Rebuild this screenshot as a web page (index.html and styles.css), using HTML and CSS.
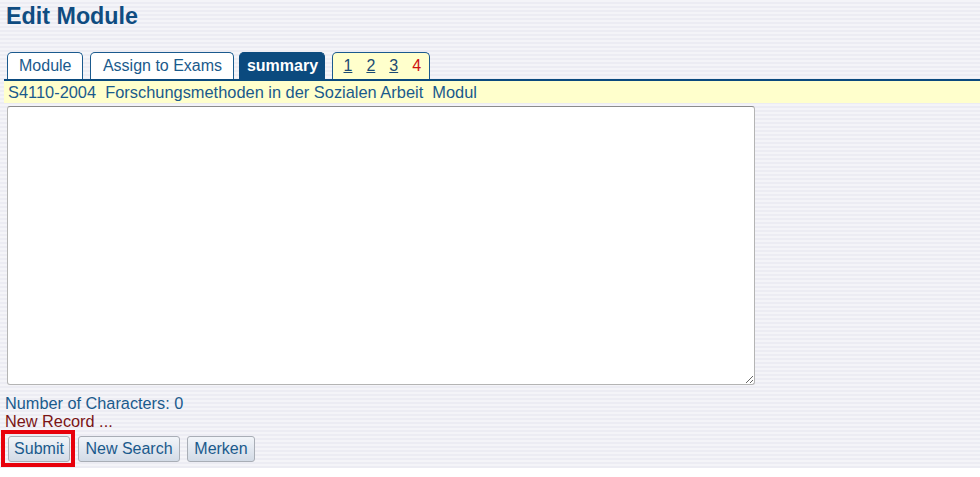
FILE: index.html
```html
<!DOCTYPE html>
<html lang="en">
<head>
<meta charset="utf-8">
<title>Edit Module</title>
<link rel="stylesheet" href="styles.css">
</head>
<body>
<div class="page">
  <h1 class="title">Edit Module</h1>
  <div class="content">
    <div class="tabs">
      <a class="tab">Module</a>
      <a class="tab tab-gap-s">Assign to Exams</a>
      <a class="tab tab-active">summary</a>
      <div class="tab tab-pages">
        <a class="pg">1</a><a class="pg">2</a><a class="pg">3</a><span class="pg pg-cur">4</span>
      </div>
    </div>
    <div class="record">S4110-2004&nbsp; Forschungsmethoden in der Sozialen Arbeit&nbsp; Modul</div>
    <textarea class="summary-box"></textarea>
    <div class="count">Number of Characters: 0</div>
    <div class="status">New Record ...</div>
    <div class="buttons">
      <span class="highlight"><button class="btn btn-submit">Submit</button></span>
      <button class="btn btn-search">New Search</button>
      <button class="btn btn-merken">Merken</button>
    </div>
  </div>
</div>
</body>
</html>
```
FILE: styles.css
```css
html, body {
  margin: 0;
  padding: 0;
  background: #ffffff;
}
body {
  font-family: "Liberation Sans", Arial, sans-serif;
  font-size: 16px;
  color: #1a5a8c;
}
.page {
  height: 468px;
  background: repeating-linear-gradient(to bottom, #f4f4f8 0, #f4f4f8 2px, #ececf3 2px, #ececf3 4px);
  overflow: hidden;
}
.title {
  margin: 0;
  padding: 3px 0 0 6px;
  font-size: 23.3px;
  font-weight: bold;
  color: #0f4c81;
  line-height: 26px;
}
.content {
  padding: 23px 0 0 4px;
}
.tabs {
  display: flex;
  align-items: flex-end;
  padding-left: 3px;
  border-bottom: 2px solid #0b4a7e;
  height: 27px;
}
.tab {
  box-sizing: border-box;
  height: 27px;
  padding: 0 11px;
  margin-right: 7px;
  border: 1px solid #1b5a8e;
  border-bottom: none;
  border-radius: 5px 5px 0 0;
  background: #ffffff;
  color: #1a5a8c;
  line-height: 26px;
  font-size: 16px;
}
.tab-gap-s {
  width: 144px;
  text-align: center;
  padding: 0;
  margin-right: 5px;
}
.tab-active {
  background: #0b4a7e;
  border-color: #0b4a7e;
  color: #ffffff;
  font-weight: bold;
  width: 86px;
  padding: 0;
  text-align: center;
}
.tab-pages {
  background: #ffffcc;
  display: flex;
  gap: 14px;
  padding: 0 10px 0 10px;
  width: 98px;
}
.pg {
  color: #1a4a72;
  text-decoration: underline;
}
.pg-cur {
  color: #cc1111;
  text-decoration: none;
}
.record {
  height: 22px;
  line-height: 22px;
  background: #ffffcc;
  padding-left: 4px;
  font-size: 16.4px;
  color: #1a5a8c;
  white-space: pre;
}
.summary-box {
  display: block;
  box-sizing: border-box;
  margin: 3px 0 0 3px;
  width: 748px;
  height: 279px;
  border: 1px solid #b4b4b4;
  border-top-color: #8c8c8c;
  border-radius: 3px;
  background: #ffffff;
  resize: both;
}
.count {
  margin-top: 9px;
  line-height: 18px;
  padding-left: 1px;
  font-size: 16.3px;
  color: #1a5a8c;
}
.status {
  line-height: 18px;
  padding-left: 1px;
  font-size: 16.3px;
  color: #7a1414;
}
.buttons {
  display: flex;
  align-items: center;
  margin-left: -3px;
}
.highlight {
  display: inline-block;
  border: 4px solid #e8000b;
  padding: 2px 1px 1px 3px;
}
.btn {
  box-sizing: border-box;
  height: 26px;
  padding: 0 6px;
  font-family: "Liberation Sans", Arial, sans-serif;
  font-size: 16px;
  color: #1a5a8c;
  border: 1px solid #a9aeb6;
  border-radius: 3px;
  background: linear-gradient(to bottom, #f2f5f9 0%, #dfe5ee 60%, #d3dbe6 100%);
}
.btn-submit {
  width: 62px;
  padding: 0;
}
.btn-search {
  width: 102px;
  padding: 0;
  margin-left: 3px;
}
.btn-merken {
  width: 68px;
  padding: 0;
  margin-left: 7px;
}
```
